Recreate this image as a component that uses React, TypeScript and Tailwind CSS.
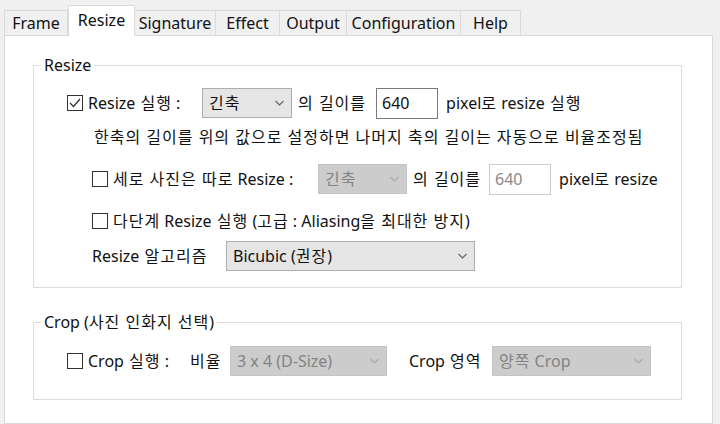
import React from 'react';

const tabs = [
  { label: 'Frame', w: 'w-[64px]' },
  { label: 'Resize', w: 'w-[67px]', active: true },
  { label: 'Signature', w: 'w-[82px]' },
  { label: 'Effect', w: 'w-[65px]' },
  { label: 'Output', w: 'w-[68px]' },
  { label: 'Configuration', w: 'w-[115px]' },
  { label: 'Help', w: 'w-[61px]' },
];

// Hangul in the fallback font runs a little narrower than Malgun Gothic, so
// give the Hangul runs a bit of tracking
const K = ({ children }: { children: string }) => (
  <>
    {children.split(/([\uac00-\ud7a3\s]*[\uac00-\ud7a3])/).map((part, i) =>
      /[\uac00-\ud7a3]/.test(part) ? (
        <span key={i} className="tracking-[1px]">
          {part}
        </span>
      ) : (
        <React.Fragment key={i}>{part}</React.Fragment>
      )
    )}
  </>
);

const Chevron = ({ disabled }: { disabled?: boolean }) => (
  <svg width="9" height="6" viewBox="0 0 9 6" className="shrink-0">
    <path
      d="M0.5 1 L4.5 5 L8.5 1"
      fill="none"
      stroke={disabled ? '#a8a8a8' : '#606060'}
      strokeWidth="1.1"
    />
  </svg>
);

const Check = ({ checked }: { checked?: boolean }) => (
  <span className="flex h-[16px] w-[16px] shrink-0 items-center justify-center border border-[#333333] bg-white">
    {checked && (
      <svg width="12" height="10" viewBox="0 0 12 10">
        <path d="M1 5 L4.5 8.5 L11 1" fill="none" stroke="#333333" strokeWidth="1.3" />
      </svg>
    )}
  </span>
);

const Combo = ({
  value,
  w,
  disabled,
}: {
  value: string;
  w: string;
  disabled?: boolean;
}) => (
  <div
    className={`flex h-[30px] ${w} shrink-0 items-center justify-between border pl-[6px] pr-[7px] ${
      disabled
        ? 'border-[#c4c4c4] bg-[#cccccc] text-[#838383]'
        : 'border-[#adadad] bg-[#e5e5e5] text-[#111111]'
    }`}
  >
    <span>
      <K>{value}</K>
    </span>
    <Chevron disabled={disabled} />
  </div>
);

const Field = ({ value, disabled }: { value: string; disabled?: boolean }) => (
  <div
    className={`flex h-[31px] w-[62px] shrink-0 items-center border pl-[5px] ${
      disabled ? 'border-[#cccccc] text-[#8a8a8a]' : 'border-[#7a7a7a] text-[#111111]'
    }`}
  >
    {value}
  </div>
);

export default function App() {
  return (
    <div
      className="flex h-[424px] w-[720px] flex-col overflow-hidden bg-[#f0f0f0] text-[16px] leading-[20px] text-[#111111]"
      style={{ fontFamily: '"Noto Sans", "Noto Sans CJK KR", sans-serif' }}
    >
      {/* tab strip */}
      <div className="flex h-[35px] items-end pl-[4px]">
        {tabs.map((t) =>
          t.active ? (
            <div
              key={t.label}
              className={`relative z-10 -mb-px flex h-[31px] ${t.w} items-start justify-center border border-b-0 border-[#d9d9d9] bg-white pt-[4px]`}
            >
              {t.label}
            </div>
          ) : (
            <div
              key={t.label}
              className={`-ml-px flex h-[25px] ${t.w} items-center justify-center border border-b-0 border-[#d9d9d9] bg-[#f0f0f0] first:ml-0`}
            >
              {t.label}
            </div>
          )
        )}
      </div>

      {/* page */}
      <div className="ml-[4px] w-[709px] flex-1 border border-[#d9d9d9] bg-white pl-[28px] pt-[19px]">
        <fieldset className="w-[649px] border border-[#dcdcdc] pb-[16px] pl-[33px]">
          <legend className="-ml-[26px] px-[3px]">Resize</legend>

          <div className="mt-[13px] flex h-[30px] items-center">
            <Check checked />
            <span className="ml-[5px] w-[114px]">
              <K>Resize 실행 :</K>
            </span>
            <Combo value="긴축" w="w-[90px]" />
            <span className="ml-[6px]">
              <K>의 길이를</K>
            </span>
            <span className="ml-[10px]">
              <Field value="640" />
            </span>
            <span className="ml-[8px]">
              <K>pixel로 resize 실행</K>
            </span>
          </div>

          <div className="mt-[9px] flex h-[20px] items-center pl-[27px]">
            <K>한축의 길이를 위의 값으로 설정하면 나머지 축의 길이는 자동으로 비율조정됨</K>
          </div>

          <div className="mt-[17px] flex h-[30px] items-center pl-[25px]">
            <Check />
            <span className="ml-[5px] w-[205px]">
              <K>세로 사진은 따로 Resize :</K>
            </span>
            <Combo value="긴축" w="w-[89px]" disabled />
            <span className="ml-[6px]">
              <K>의 길이를</K>
            </span>
            <span className="ml-[8px]">
              <Field value="640" disabled />
            </span>
            <span className="ml-[8px]">
              <K>pixel로 resize</K>
            </span>
          </div>

          <div className="mt-[17px] flex h-[20px] items-center pl-[25px]">
            <Check />
            <span className="ml-[5px]">
              <K>다단계 Resize 실행 (고급 : Aliasing을 최대한 방지)</K>
            </span>
          </div>

          <div className="mt-[10px] flex h-[30px] items-center pl-[25px]">
            <span className="w-[134px]">
              <K>Resize 알고리즘</K>
            </span>
            <Combo value="Bicubic (권장)" w="w-[249px]" />
          </div>
        </fieldset>

        <fieldset className="mt-[24px] w-[649px] border border-[#dcdcdc] pb-[23px] pl-[33px]">
          <legend className="-ml-[26px] px-[3px]">
            <K>Crop (사진 인화지 선택)</K>
          </legend>

          <div className="mt-[14px] flex h-[30px] items-center">
            <Check />
            <span className="ml-[5px] w-[102px]">
              <K>Crop 실행 :</K>
            </span>
            <span className="w-[40px]">
              <K>비율</K>
            </span>
            <Combo value="3 x 4 (D-Size)" w="w-[157px]" disabled />
            <span className="ml-[22px] w-[83px]">
              <K>Crop 영역</K>
            </span>
            <Combo value="양쪽 Crop" w="w-[159px]" disabled />
          </div>
        </fieldset>
      </div>
    </div>
  );
}
